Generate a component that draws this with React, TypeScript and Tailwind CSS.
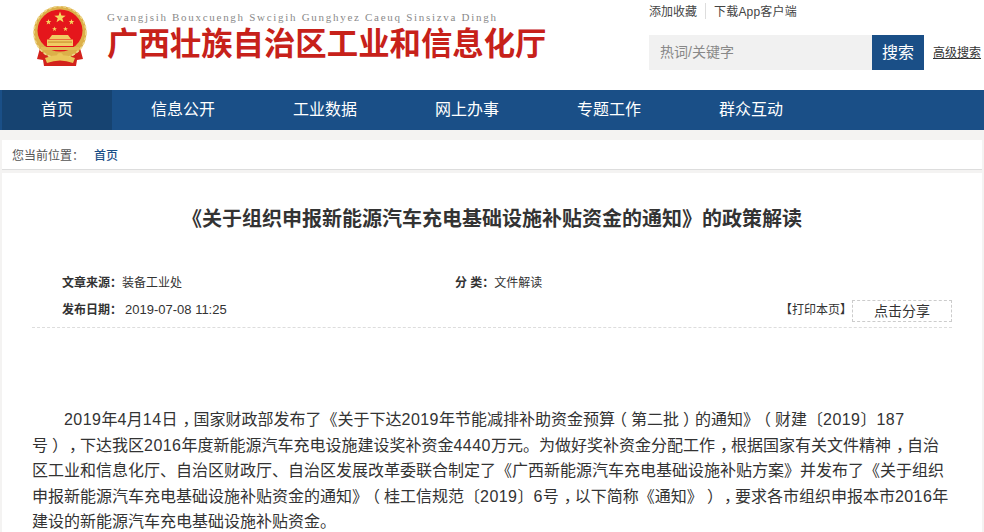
import type { ReactNode } from "react";

const cjk = "font-['Liberation_Sans','Noto_Sans_CJK_SC',sans-serif]";

function Emblem() {
  const star = (cx: number, cy: number, r: number) => {
    const pts: string[] = [];
    for (let i = 0; i < 10; i++) {
      const a = -Math.PI / 2 + (i * Math.PI) / 5;
      const rr = i % 2 === 0 ? r : r * 0.4;
      pts.push(`${cx + rr * Math.cos(a)},${cy + rr * Math.sin(a)}`);
    }
    return <polygon points={pts.join(" ")} fill="#f6d860" />;
  };
  return (
    <svg width="54" height="60" viewBox="0 0 54 60" className="block shrink-0">
      <defs>
        <filter id="b"><feGaussianBlur stdDeviation="0.35" /></filter>
      </defs>
      <g filter="url(#b)">
        <path d="M7 42 L4 53 L10 54 L11 60 L43 60 L44 54 L50 53 L47 42 Z" fill="#d3231c" />
        <ellipse cx="27" cy="26.5" rx="26.5" ry="26.5" fill="#dcb04a" />
        <ellipse cx="27" cy="26.5" rx="26" ry="26" fill="none" stroke="#eed78a" strokeWidth="1.6" strokeDasharray="3 2" />
        <ellipse cx="27" cy="24.5" rx="22.5" ry="21" fill="#e5151b" />
        {star(27, 11.5, 6)}
        {star(15.5, 16, 3)}
        {star(38.5, 16, 3)}
        {star(21.5, 23, 2.6)}
        {star(32.5, 23, 2.6)}
        <path d="M19 29 H35 L38 33 H16 Z" fill="#f1cc63" />
        <rect x="14" y="33.5" width="26" height="6.5" fill="#f1cc63" />
        <rect x="15" y="35.5" width="24" height="1.1" fill="#c98d2a" />
        <rect x="8" y="41" width="38" height="3" fill="#e3bd55" />
        <path d="M12 52 Q27 46 42 52 L40 57 Q27 52 14 57 Z" fill="#eac65a" />
        <circle cx="27" cy="50" r="3" fill="#eac65a" />
      </g>
    </svg>
  );
}

const nav = ["信息公开", "工业数据", "网上办事", "专题工作", "群众互动"];

// The reference's fullwidth commas and parentheses sit near the middle of their cells,
// and its digits are a little wider than Liberation Sans's.
function Line({ text }: { text: string }) {
  const parts: ReactNode[] = text.split(/([，（）]|\d+)/).map((p, i) => {
    if (p === "，") return <span key={i} className="ml-[5px] mr-[3px] [font-feature-settings:'halt']">{p}</span>;
    if (p === "（" || p === "）") return <span key={i} className="mx-[4px] [font-feature-settings:'halt']">{p}</span>;
    if (/^\d+$/.test(p)) return <span key={i} className="tracking-[0.45px]">{p}</span>;
    return p;
  });
  return <>{parts}</>;
}

const lines = [
  "2019年4月14日，国家财政部发布了《关于下达2019年节能减排补助资金预算（第二批）的通知》（财建〔2019〕187",
  "号），下达我区2016年度新能源汽车充电设施建设奖补资金4440万元。为做好奖补资金分配工作，根据国家有关文件精神，自治",
  "区工业和信息化厅、自治区财政厅、自治区发展改革委联合制定了《广西新能源汽车充电基础设施补贴方案》并发布了《关于组织",
  "申报新能源汽车充电基础设施补贴资金的通知》（桂工信规范〔2019〕6号，以下简称《通知》），要求各市组织申报本市2016年",
  "建设的新能源汽车充电基础设施补贴资金。",
];

export default function App() {
  return (
    <div className={`h-[532px] w-[984px] overflow-hidden bg-[#f4f3f2] [text-spacing-trim:space-all] ${cjk}`}>
      <header className="flex h-[90px] bg-white">
        <div className="flex pl-[33px] pt-[6px]">
          <Emblem />
          <div className="pl-[20px]">
            <div className="pt-[4px] font-['Liberation_Serif',serif] text-[11px] leading-[14px] tracking-[1.71px] text-[#8a8a8a]">
              Gvangjsih Bouxcuengh Swcigih Gunghyez Caeuq Sinsizva Dingh
            </div>
            <div className="whitespace-nowrap pt-[2px] text-[31.4px] font-bold leading-[38px] text-[#c7211a]">
              广西壮族自治区工业和信息化厅
            </div>
          </div>
        </div>
        <div className="ml-auto w-[335px]">
          <div className="flex h-[35px] items-start pt-[3px] text-[12px] text-[#444]">
            <span className="pt-[1px] leading-[17px]">添加收藏</span>
            <span className="mx-[8px] h-[16px] w-px bg-[#ddd]"></span>
            <span className="pt-[1px] leading-[17px] tracking-[0.2px]">下载App客户端</span>
          </div>
          <div className="flex h-[35px] items-center">
            <div className="flex h-full w-[223px] items-center bg-[#f1f1f1] pl-[11px] text-[14px] text-[#888]">热词/关键字</div>
            <div className="flex h-full w-[52px] items-center justify-center bg-[#1a4f87] text-[16px] text-white">搜索</div>
            <span className="ml-[9px] text-[12px] text-[#333] underline">高级搜索</span>
          </div>
        </div>
      </header>

      <nav className="flex h-[40px] bg-[#1a4f87] pl-[2px] text-[16px] leading-[40px] text-white">
        <div className="w-[110px] bg-[#164371] text-center">首页</div>
        {nav.map((n) => (
          <div key={n} className="w-[142px] text-center">{n}</div>
        ))}
      </nav>

      <div className="mx-[2px] mt-[10px] flex h-[30px] items-center border-b border-[#ddd] bg-white pl-[10px] pt-[2px] text-[12px] text-[#555]">
        <span className="w-[82px]">您当前位置：</span>
        <span className="font-medium text-[#1a4f87]">首页</span>
      </div>

      <main className="mx-[2px] mt-[3px] h-[400px] bg-white px-[30px]">
        <h1 className="pt-[32px] text-center text-[20px] font-bold leading-[28px] text-[#333]">
          《关于组织申报新能源汽车充电基础设施补贴资金的通知》的政策解读
        </h1>
        <div className="mt-[36px] border-b border-dashed border-[#ddd] pb-[4px] pl-[30px] text-[12px] text-[#333]">
          <div className="flex h-[27px] items-center">
            <div className="w-[393px]">
              <b>文章来源：</b>
              <span>装备工业处</span>
            </div>
            <div>
              <b>分 类：</b>
              <span>文件解读</span>
            </div>
          </div>
          <div className="flex h-[27px] items-center">
            <b>发布日期：</b>
            <span className="ml-[3px] text-[13px]">2019-07-08 11:25</span>
            <span className="ml-auto">【打印本页】</span>
            <span className="mt-[3px] flex h-[22px] w-[100px] items-center justify-center border border-dashed border-[#ccc] text-[14px]">点击分享</span>
          </div>
        </div>
        <p className="mt-[79px] whitespace-nowrap text-[16px] leading-[25.6px] text-[#333]">
          {lines.map((l, i) => (
            <span key={i} className={i === 0 ? "block pl-[32px]" : "block"}>
              <Line text={l} />
            </span>
          ))}
        </p>
      </main>
    </div>
  );
}
